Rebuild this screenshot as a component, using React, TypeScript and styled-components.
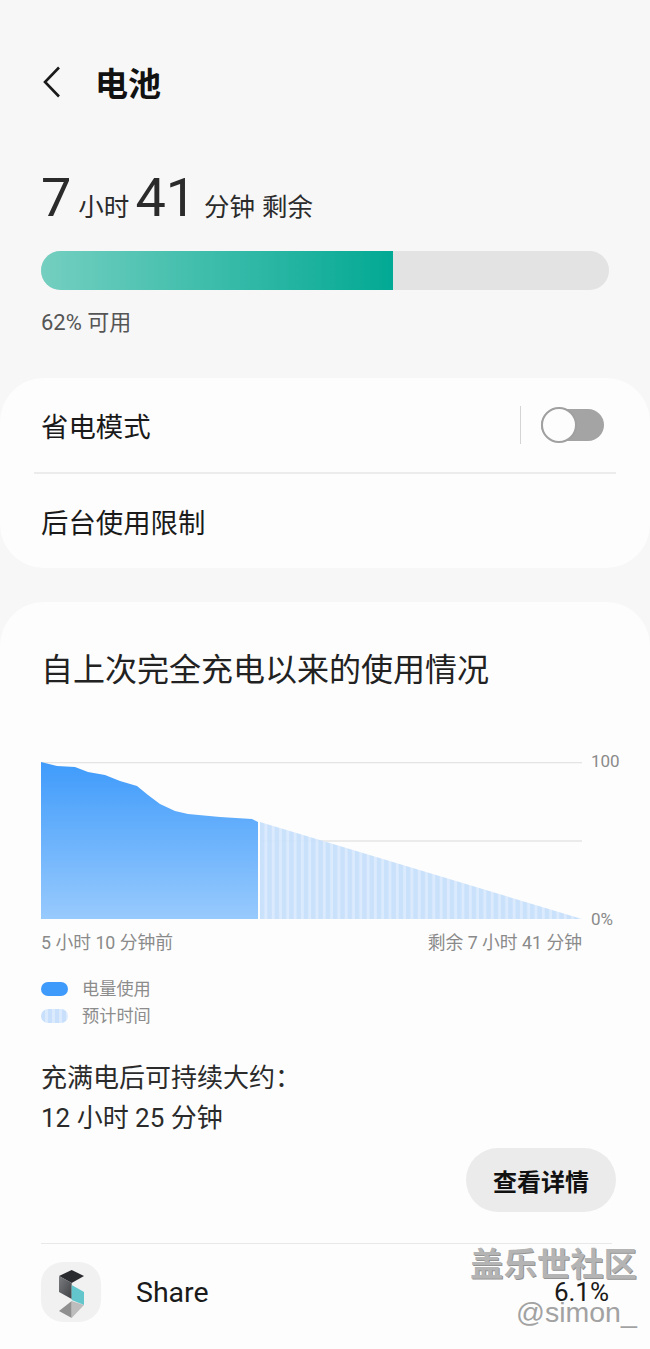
import React from "react";
import styled, { createGlobalStyle } from "styled-components";

const FONT = `Roboto, "Noto Sans CJK SC", sans-serif`;

const usedLine =
  "M0 0 L16 4 L34 5 L47 10 L64 13 L79 19 L96 24 L107 33 L119 42 L134 49 L147 52 L179 55 L211 57 L217 60 L217 157 L0 157 Z";

const GlobalStyle = createGlobalStyle`
  html, body {
    margin: 0;
    padding: 0;
    background: #f7f7f7;
    font-family: ${FONT};
  }
`;

const Page = styled.div`
  position: relative;
  width: 650px;
  height: 1349px;
  overflow: hidden;
  background: #f7f7f7;
`;

const Header = styled.div`
  display: flex;
  align-items: center;
  height: 60px;
  padding: 52px 0 0 41px;
`;

const Title = styled.div`
  margin-left: 33px;
  font-size: 33px;
  font-weight: 700;
  color: #111;
`;

const Summary = styled.div`
  padding: 54px 41px 0;
`;

const TimeLine = styled.div`
  display: flex;
  align-items: baseline;
  height: 64px;
  color: #2b2b2b;
`;

const BigNum = styled.span<{ $gap: number }>`
  font-size: 54px;
  line-height: 64px;
  margin-right: ${(p) => p.$gap}px;
`;

const Unit = styled.span<{ $gap: number }>`
  font-size: 25.5px;
  margin-right: ${(p) => p.$gap}px;
`;

const BarTrack = styled.div`
  margin-top: 21px;
  width: 568px;
  height: 39px;
  border-radius: 20px;
  background: #e3e3e3;
  overflow: hidden;
`;

const BarFill = styled.div`
  height: 100%;
  background: linear-gradient(90deg, #74cfc0 0%, #02a994 100%);
`;

const Available = styled.div`
  margin-top: 19px;
  font-size: 22px;
  line-height: 28px;
  color: #555;
`;

const Card = styled.div`
  margin-top: 41px;
  height: 190px;
  border-radius: 44px;
  background: #fdfdfd;
  display: flex;
  flex-direction: column;
`;

const Row = styled.div`
  flex: 1;
  display: flex;
  align-items: center;
  justify-content: space-between;
  padding: 0 46px 0 41px;
  font-size: 27.4px;
  color: #1a1a1a;
`;

const RowRule = styled.div`
  height: 2px;
  margin: 0 34px;
  background: #ececec;
`;

const ToggleArea = styled.div`
  display: flex;
  align-items: center;
  gap: 20px;
`;

const ToggleRule = styled.div`
  width: 1px;
  height: 38px;
  background: #d4d4d4;
`;

const Toggle = styled.div`
  position: relative;
  width: 63px;
  height: 32px;
  border-radius: 16px;
  background: #a4a4a4;
`;

const Thumb = styled.div`
  position: absolute;
  left: 0;
  top: -2px;
  width: 36px;
  height: 36px;
  box-sizing: border-box;
  border-radius: 50%;
  background: #fdfdfd;
  border: 2px solid #a0a0a0;
`;

const UsageCard = styled.div`
  margin-top: 34px;
  height: 747px;
  border-radius: 44px 44px 0 0;
  background: #fdfdfd;
  padding: 48px 34px 0 41px;
  box-sizing: border-box;
`;

const UsageTitle = styled.div`
  font-size: 32px;
  line-height: 40px;
  color: #222;
`;

const ChartRow = styled.div`
  display: flex;
  margin-top: 72px;
  height: 158px;
`;

const ChartFrame = styled.svg`
  flex: none;
  width: 541px;
  height: 158px;
`;

const AxisLabels = styled.div`
  flex: none;
  display: flex;
  flex-direction: column;
  justify-content: space-between;
  margin: -10px 0 -8px 9px;
  font-size: 17px;
  line-height: 18px;
  color: #8a8a8a;
`;

const TimeLabels = styled.div`
  display: flex;
  justify-content: space-between;
  width: 541px;
  margin-top: 12px;
  font-size: 17.8px;
  line-height: 22px;
  color: #8a8a8a;
`;

const Legend = styled.div`
  display: flex;
  flex-direction: column;
  gap: 5px;
  margin-top: 24px;
`;

const LegendRow = styled.div`
  display: flex;
  align-items: center;
  gap: 14px;
  font-size: 17.2px;
  line-height: 22px;
  color: #8c8c8c;
`;

const Swatch = styled.div<{ $striped?: boolean }>`
  width: 27px;
  height: 14px;
  border-radius: 7px;
  background: ${(p) =>
    p.$striped
      ? "repeating-linear-gradient(90deg, #c8e0fb 0 4px, #dbebfd 4px 7px)"
      : "#3f9bfb"};
`;

const FullCharge = styled.div`
  margin-top: 31px;
  font-size: 26px;
  line-height: 40px;
  color: #2b2b2b;
`;

const ButtonRow = styled.div`
  display: flex;
  justify-content: flex-end;
  margin-top: 10px;
`;

const DetailButton = styled.div`
  display: flex;
  align-items: center;
  justify-content: center;
  width: 150px;
  height: 64px;
  border-radius: 32px;
  background: #ebebeb;
  font-size: 24px;
  font-weight: 700;
  color: #111;
`;

const AppRule = styled.div`
  margin-top: 31px;
  width: 571px;
  height: 1px;
  background: #e8e8e8;
`;

const AppRow = styled.div`
  display: flex;
  align-items: center;
  margin-top: 18px;
  width: 568px;
`;

const AppIcon = styled.div`
  display: flex;
  width: 60px;
  height: 60px;
  border-radius: 22px;
  background: #f1f1f1;
`;

const AppName = styled.div`
  flex: 1;
  margin-left: 35px;
  font-size: 28.5px;
  color: #1a1a1a;
`;

const AppPercent = styled.div`
  font-size: 26px;
  line-height: 18px;
  color: #1a1a1a;
`;

const WatermarkTitle = styled.div`
  position: absolute;
  left: 470px;
  top: 1250px;
  font-size: 33.4px;
  line-height: 30px;
  font-weight: 700;
  color: #b4b4b4;
  text-shadow: 1px 1px 0 #949494, -1px 0 0 #fff;
`;

const WatermarkHandle = styled.div`
  position: absolute;
  left: 516px;
  top: 1301px;
  font-family: "Liberation Sans", sans-serif;
  font-size: 28.5px;
  line-height: 22px;
  color: #a2a2a2;
`;

const BackIcon = () => (
  <svg width="21" height="32" viewBox="0 0 21 32" fill="none">
    <path d="M18 1.5 L4 16 L18 30.5" stroke="#1a1a1a" strokeWidth="2.6" />
  </svg>
);

const UsageChart = () => (
  <ChartFrame viewBox="0 0 541 158">
    <defs>
      <linearGradient id="used" x1="0" y1="0" x2="0" y2="1">
        <stop offset="0" stopColor="#3f9bfb" />
        <stop offset="1" stopColor="#98cafd" />
      </linearGradient>
      <pattern id="stripes" width="7.3" height="158" patternUnits="userSpaceOnUse" x="219">
        <rect width="7.3" height="158" fill="#d8e9fd" />
        <rect width="4.4" height="158" fill="#c5dffb" />
      </pattern>
    </defs>
    <line x1="0" y1="0.5" x2="541" y2="0.5" stroke="#e4e4e4" strokeWidth="1.5" />
    <line x1="219" y1="79" x2="541" y2="79" stroke="#e4e4e4" strokeWidth="1.5" />
    <path d="M219 60 L541 157 L219 157 Z" fill="url(#stripes)" fillOpacity="0.92" />
    <path d={usedLine} fill="url(#used)" />
  </ChartFrame>
);

const ShareLogo = () => (
  <svg width="60" height="60" viewBox="0 0 60 60">
    <defs>
      <linearGradient id="logoSide" x1="0" y1="0" x2="1" y2="1">
        <stop offset="0" stopColor="#7a7c80" />
        <stop offset="1" stopColor="#3f4145" />
      </linearGradient>
    </defs>
    <path d="M30.7 8 L43 14 L30.7 21 L18 14 Z" fill="#2a2b2e" />
    <path d="M18 14 L30.7 21 L30.7 37 L18 30 Z" fill="url(#logoSide)" />
    <path d="M30.7 23 L43 30 L43 43 L30.7 38 Z" fill="#62c6cc" />
    <path d="M30.7 39 L18 49 L30.7 56 Z" fill="#8f8f8f" />
    <path d="M30.7 39 L43 43 L30.7 56 Z" fill="#bdbdbd" />
  </svg>
);

const App = () => {
  return (
    <Page>
      <GlobalStyle />
      <Header>
        <BackIcon />
        <Title>电池</Title>
      </Header>
      <Summary>
        <TimeLine>
          <BigNum $gap={7}>7</BigNum>
          <Unit $gap={6}>小时</Unit>
          <BigNum $gap={8}>41</BigNum>
          <Unit $gap={7}>分钟</Unit>
          <Unit $gap={0}>剩余</Unit>
        </TimeLine>
        <BarTrack>
          <BarFill style={{ width: `${(352 / 568) * 100}%` }} />
        </BarTrack>
        <Available>62% 可用</Available>
      </Summary>
      <Card>
        <Row>
          省电模式
          <ToggleArea>
            <ToggleRule />
            <Toggle>
              <Thumb />
            </Toggle>
          </ToggleArea>
        </Row>
        <RowRule />
        <Row>后台使用限制</Row>
      </Card>
      <UsageCard>
        <UsageTitle>自上次完全充电以来的使用情况</UsageTitle>
        <ChartRow>
          <UsageChart />
          <AxisLabels>
            <span>100</span>
            <span>0%</span>
          </AxisLabels>
        </ChartRow>
        <TimeLabels>
          <span>5 小时 10 分钟前</span>
          <span>剩余 7 小时 41 分钟</span>
        </TimeLabels>
        <Legend>
          <LegendRow>
            <Swatch />
            电量使用
          </LegendRow>
          <LegendRow>
            <Swatch $striped />
            预计时间
          </LegendRow>
        </Legend>
        <FullCharge>
          充满电后可持续大约：
          <br />
          12 小时 25 分钟
        </FullCharge>
        <ButtonRow>
          <DetailButton>查看详情</DetailButton>
        </ButtonRow>
        <AppRule />
        <AppRow>
          <AppIcon>
            <ShareLogo />
          </AppIcon>
          <AppName>Share</AppName>
          <AppPercent>6.1%</AppPercent>
        </AppRow>
      </UsageCard>
      <WatermarkTitle>盖乐世社区</WatermarkTitle>
      <WatermarkHandle>@simon_</WatermarkHandle>
    </Page>
  );
};

export default App;
